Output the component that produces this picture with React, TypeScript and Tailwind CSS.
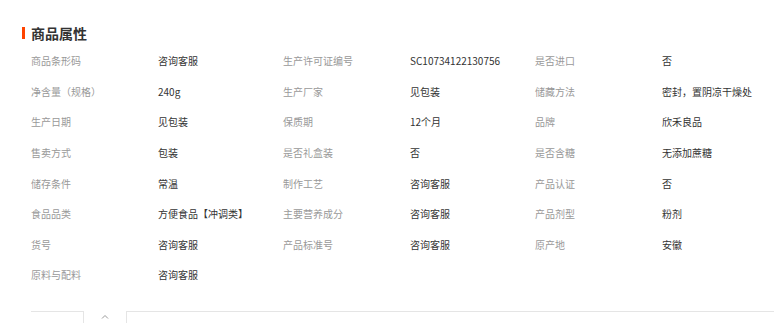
import React from 'react';

const rows: [string, string][][] = [
  [['商品条形码', '咨询客服'], ['生产许可证编号', 'SC10734122130756'], ['是否进口', '否']],
  [['净含量（规格）', '240g'], ['生产厂家', '见包装'], ['储藏方法', '密封，置阴凉干燥处']],
  [['生产日期', '见包装'], ['保质期', '12个月'], ['品牌', '欣禾良品']],
  [['售卖方式', '包装'], ['是否礼盒装', '否'], ['是否含糖', '无添加蔗糖']],
  [['储存条件', '常温'], ['制作工艺', '咨询客服'], ['产品认证', '否']],
  [['食品品类', '方便食品【冲调类】'], ['主要营养成分', '咨询客服'], ['产品剂型', '粉剂']],
  [['货号', '咨询客服'], ['产品标准号', '咨询客服'], ['原产地', '安徽']],
  [['原料与配料', '咨询客服']],
];

export default function App() {
  return (
    <div className="w-[774px] h-[323px] bg-white overflow-hidden font-['Noto_Sans_CJK_SC','Noto_Sans',sans-serif]">
      <div className="pt-[25px] pl-[22px] flex items-center h-[40px]">
        <span className="w-[3px] h-[12px] bg-[#ff4400]" />
        <h2 className="ml-[6px] text-[14px] font-bold text-[#333] leading-none">商品属性</h2>
      </div>
      <div className="pl-[31px] pt-[6px]">
        {rows.map((row, i) => (
          <div key={i} className="flex h-[30.6px] items-center text-[10px] leading-none">
            {row.map(([label, value], j) => (
              <div key={j} className="flex w-[252px] shrink-0">
                <span className="w-[127px] shrink-0 text-[#999]">{label}</span>
                <span className="text-[#333] whitespace-nowrap">{value}</span>
              </div>
            ))}
          </div>
        ))}
      </div>
      <div className="mt-[20px] ml-[31px] flex h-[20px]">
        <div className="w-[53px] border-t border-r border-[#e5e5e5]" />
        <div className="w-[42px] flex justify-center pt-[3px]">
          <svg width="8" height="5" viewBox="0 0 8 5" fill="none">
            <path d="M1 4.5L4 1.5L7 4.5" stroke="#999" strokeWidth="1" />
          </svg>
        </div>
        <div className="flex-1 border-t border-l border-[#e5e5e5]" />
      </div>
    </div>
  );
}
